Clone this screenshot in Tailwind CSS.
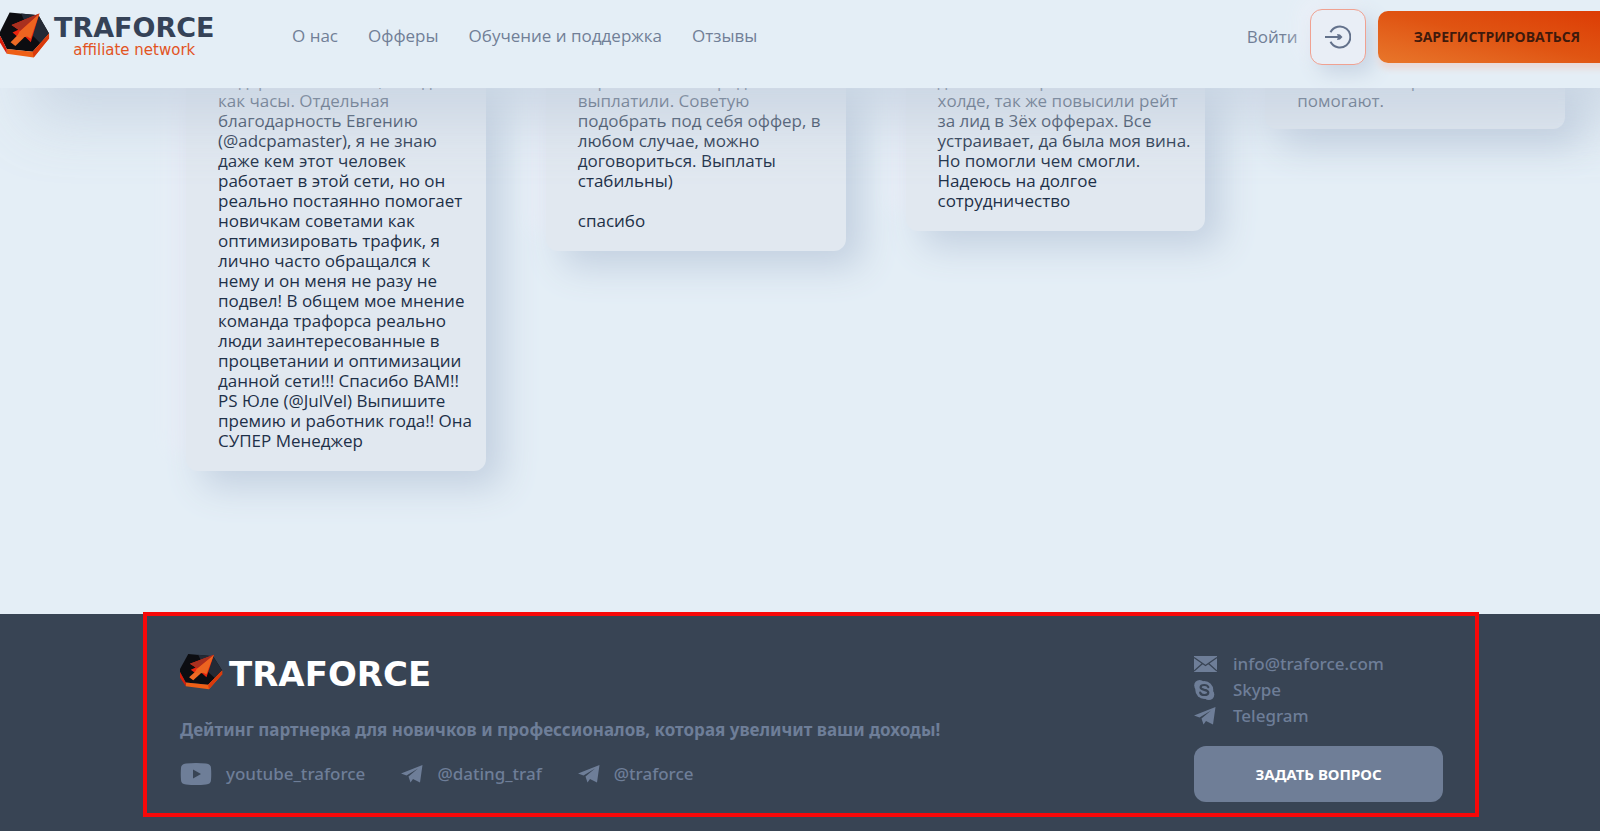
<!DOCTYPE html>
<html lang="ru">
<head>
<meta charset="utf-8">
<title>Traforce</title>
<meta name="viewport" content="width=device-width, initial-scale=1">
<script src="https://cdn.jsdelivr.net/npm/@tailwindcss/browser@4"></script>
</head>
<body class="flex min-h-screen flex-col overflow-x-hidden bg-[#e4eef6] font-['Open_Sans',sans-serif] text-[#1e3048]">

<svg class="hidden" aria-hidden="true">
  <symbol id="mark" viewBox="0 0 52 48">
    <path d="M10 0 40 3 51 22 34 41 7 38 -1 22Z" fill="#0c0d11"/>
    <path d="M22 1 40 3 51 22 42 32 30 20Z" fill="#242a35"/>
    <path d="M7 38 34 41 51 22 51 27 35 47 7 43Z" fill="#ee5f16"/>
    <path d="M34 41 51 22 51 27 35 47Z" fill="#d93a0c"/>
    <path d="M-1 22 7 38 7 43-2 28Z" fill="#d81d0a"/>
    <path d="M41 1 12 13 19 18 13 21 18 25 24 22 26 25 32 31Z" fill="#ea240e"/>
    <path d="M20 22 25 26 16 35 11 31Z" fill="#ee6a24"/>
    <path d="M41 1 20 20 18 25 24 26 28 25 32 27Z" fill="#ec6420"/>
    <path d="M41 1 12 13 21 19Z" fill="#a8301f"/>
  </symbol>
  <symbol id="plane" viewBox="0 0 22 18">
    <path d="M0 8.500 21.500 0 19 17.500 12 14 9.500 17.500 7.500 11.500 17 3.500 5.500 10.500Z" fill="currentColor"/>
  </symbol>
</svg>

<header class="relative z-10 flex h-[88px] shrink-0 items-start bg-[#e4eef6] shadow-[30px_30px_60px_rgba(196,209,224,0.8)]">
  <a href="#" class="flex w-[292px] shrink-0 items-start pt-3" aria-label="Traforce affiliate network">
    <svg class="h-[47px] w-[50px]" overflow="visible"><use href="#mark"/></svg>
    <span class="ml-1 flex flex-col items-center font-['DejaVu_Sans',sans-serif]">
      <span class="text-[27px] leading-8 font-bold text-[#354257]">TRAFORCE</span>
      <span class="text-[15px] leading-3 text-[#e2541f]">affiliate network</span>
    </span>
  </a>
  <nav class="flex gap-[30px] pt-6 text-[17px] leading-6 text-[#717f97]">
    <a href="#">О нас</a>
    <a href="#">Офферы</a>
    <a href="#">Обучение и поддержка</a>
    <a href="#">Отзывы</a>
  </nav>
  <div class="-mr-4 ml-auto flex shrink-0 items-start gap-3 pt-[9px]">
    <a href="#" class="pt-4 text-[17px] leading-6 text-[#717f97]">Войти</a>
    <button aria-label="Войти" class="grid size-14 place-items-center rounded-xl border border-[#f0a191] bg-[#e9eef6] text-[#63718b] shadow-[8px_8px_20px_#c8d4e3,-8px_-8px_20px_#edf0f8]">
      <svg class="h-6 w-[26px]" viewBox="0 0 26 24" fill="none" stroke="currentColor" stroke-width="2"><path d="M5.500 7.200A10.500 10.500 0 1 1 5.500 16.800"/><path d="M0 12h14"/><path d="M12 9 15 9.500 17.500 12 15 14.500 12 15 13 12z" fill="currentColor" stroke="none"/></svg>
    </button>
    <button class="mt-0.5 h-[52px] rounded-[10px] bg-linear-to-tr from-[#e8762a] via-[#e05412] to-[#dc3a04] px-9 text-sm font-bold text-[#3f1a0c] shadow-[0_6px_6px_#e9d9d8]">ЗАРЕГИСТРИРОВАТЬСЯ</button>
  </div>
</header>

<main class="h-[526px] shrink-0 overflow-hidden pr-[35px] pl-[186px]">
  <div class="-mt-[17px] grid grid-cols-4 items-start gap-[60px] text-[17px] leading-5 whitespace-nowrap">
    <article class="rounded-b-xl bg-[#e1e8f0] px-8 pb-5 shadow-[16px_16px_36px_#c3d0e0,-16px_-16px_20px_#e9eef7]">подержка отвечает, всегда<br>как часы. Отдельная<br>благодарность Евгению<br>(@adcpamaster), я не знаю<br>даже кем этот человек<br>работает в этой сети, но он<br>реально постаянно помогает<br>новичкам советами как<br>оптимизировать трафик, я<br>лично часто обращался к<br>нему и он меня не разу не<br>подвел! В общем мое мнение<br>команда трафорса реально<br>люди заинтересованные в<br>процветании и оптимизации<br>данной сети!!! Спасибо ВАМ!!<br>PS Юле (@JulVel) Выпишите<br>премию и работник года!! Она<br>СУПЕР Менеджер</article>
    <article class="rounded-b-xl bg-[#e1e8f0] px-8 pb-5 shadow-[16px_16px_36px_#c3d0e0,-16px_-16px_20px_#e9eef7]">через 5 мин. впереди<br>выплатили. Советую<br>подобрать под себя оффер, в<br>любом случае, можно<br>договориться. Выплаты<br>стабильны)<br><br>спасибо</article>
    <article class="rounded-b-xl bg-[#e1e8f0] px-8 pb-5 shadow-[16px_16px_36px_#c3d0e0,-16px_-16px_20px_#e9eef7]">даже не попросили в<br>холде, так же повысили рейт<br>за лид в 3ёх офферах. Все<br>устраивает, да была моя вина.<br>Но помогли чем смогли.<br>Надеюсь на долгое<br>сотрудничество</article>
    <article class="rounded-b-xl bg-[#e1e8f0] px-8 pb-[18px] shadow-[16px_16px_36px_#c3d0e0,-16px_-16px_20px_#e9eef7]">Они очень хорошо<br>помогают.</article>
  </div>
</main>

<footer class="relative flex grow items-start justify-between bg-[#384454] pr-[157px] pl-[180px] font-['Noto_Sans',sans-serif] text-[17px] font-medium text-[#6e7e98]">
  <div class="pt-10">
    <a href="#" class="flex h-9 items-center gap-1.5" aria-label="Traforce">
      <svg class="h-9 w-[43px]" viewBox="0 0 52 48" preserveAspectRatio="none" overflow="visible"><use href="#mark" width="52" height="48"/></svg>
      <span class="pt-1 font-['DejaVu_Sans',sans-serif] text-[34px] leading-9 font-bold text-white">TRAFORCE</span>
    </a>
    <p class="mt-7 leading-6 font-bold">Дейтинг партнерка для новичков и профессионалов, которая увеличит ваши доходы!</p>
    <div class="mt-5 flex gap-9 leading-6">
      <a href="#" class="flex items-center gap-[14px]">
        <svg class="h-[22px] w-8" viewBox="0 0 32 22"><path fill-rule="evenodd" d="M6 .5Q16-.5 26 .5 31 1 31 5 31.500 11 31 17 31 21 26 21.500 16 22.500 6 21.500 1 21 1 17 .5 11 1 5 1 1 6 .5ZM13 6.500V15.500L21 11Z" fill="currentColor"/></svg>
        youtube_traforce
      </a>
      <a href="#" class="flex items-center gap-[14px]"><svg class="h-[18px] w-[22px]"><use href="#plane"/></svg>@dating_traf</a>
      <a href="#" class="flex items-center gap-[14px]"><svg class="h-[18px] w-[22px]"><use href="#plane"/></svg>@traforce</a>
    </div>
  </div>
  <div class="flex w-[249px] flex-col pt-[37px] leading-[26px]">
    <a href="#" class="flex items-center gap-4">
      <svg class="h-4 w-[23px]" viewBox="0 0 23 16"><path d="M0 0h23v16H0z" fill="currentColor"/><path d="M0 1.500 11.500 9.500 23 1.500M0 15 8.500 7.500M23 15 14.500 7.500" fill="none" stroke="#384454" stroke-width="1.300"/></svg>
      info@traforce.com
    </a>
    <a href="#" class="flex items-center gap-4">
      <svg class="h-5 w-[23px]" viewBox="0 0 23 20"><circle cx="10.300" cy="10" r="9" fill="currentColor"/><circle cx="5.700" cy="5.500" r="5.500" fill="currentColor"/><circle cx="14.800" cy="14.500" r="5.500" fill="currentColor"/><path d="M14.300 7.200Q13.500 5 10.300 5 6.600 5 6.600 7.300 6.600 9 10.300 9.800 14.300 10.500 14.300 12.600 14.200 15 10.400 15 6.900 15 6.200 12.600" fill="none" stroke="#384454" stroke-width="2.200" stroke-linecap="round"/></svg>
      Skype
    </a>
    <a href="#" class="flex items-center gap-[17px]"><svg class="h-[18px] w-[22px]"><use href="#plane"/></svg>Telegram</a>
    <button class="mt-[17px] h-14 rounded-xl bg-[#6f7e97] text-[15px] font-bold text-white">ЗАДАТЬ ВОПРОС</button>
  </div>
  <!-- highlight frame over the footer content -->
  <div class="pointer-events-none absolute -top-0.5 right-[121px] bottom-[14px] left-[143px] border-4 border-[#f80808]"></div>
</footer>
</body>
</html>
